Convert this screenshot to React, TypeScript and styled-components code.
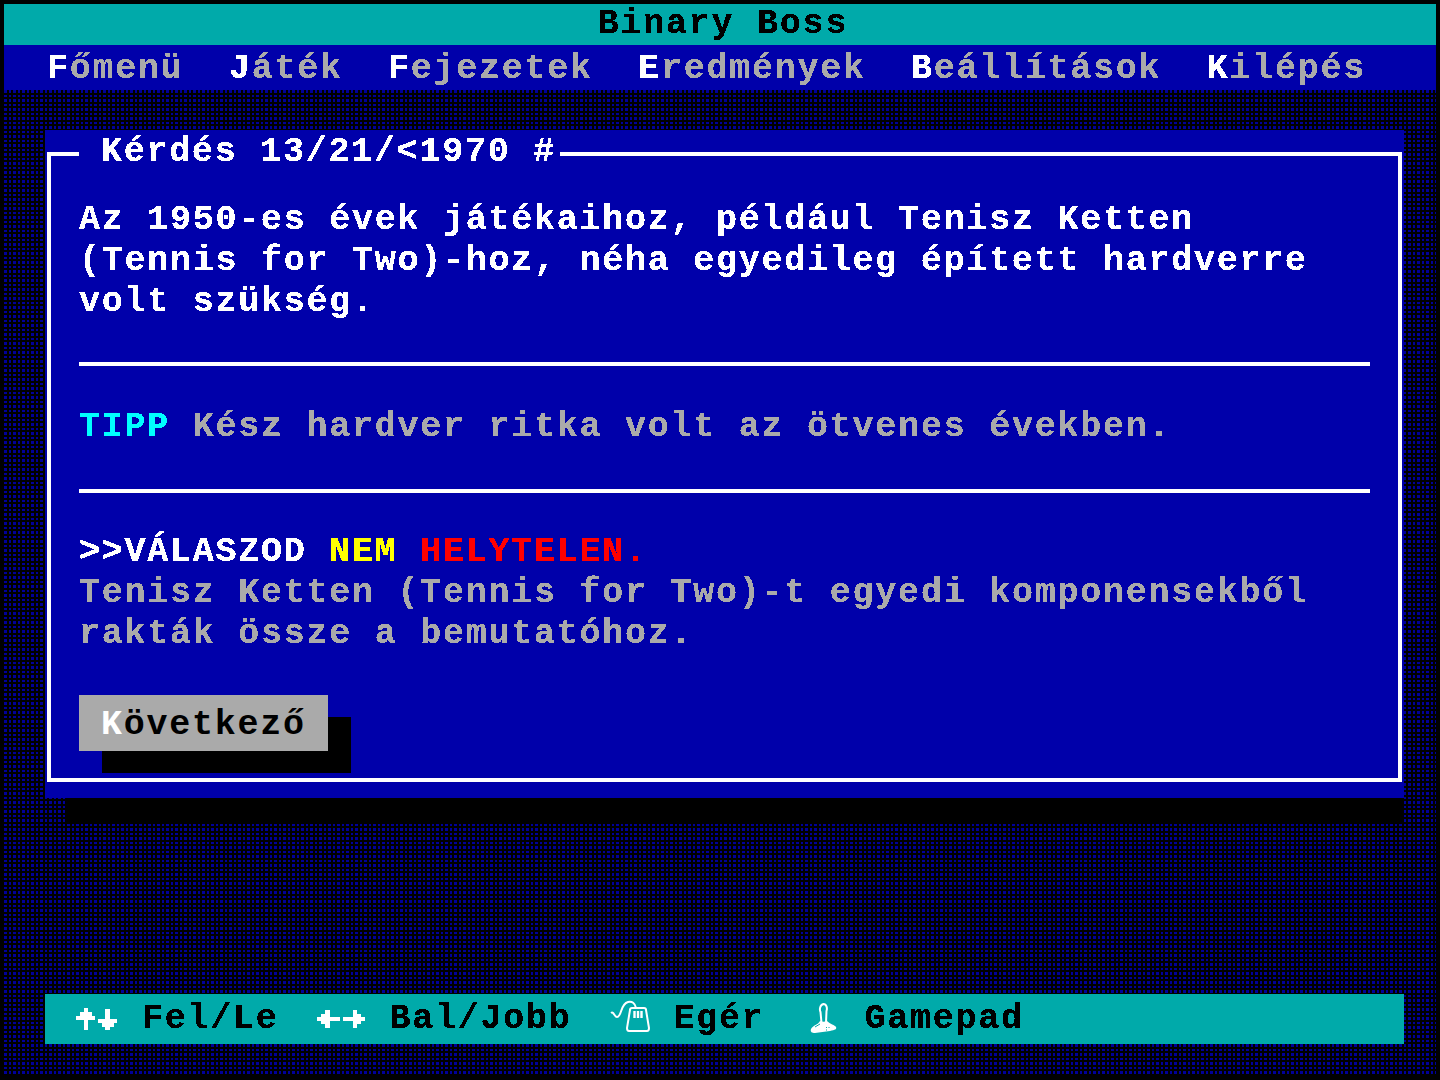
import React from 'react';
import styled, { createGlobalStyle, css } from 'styled-components';

const GlobalStyle = createGlobalStyle`
  html, body {
    margin: 0;
    padding: 0;
    background: #000;
  }
  * {
    box-sizing: border-box;
  }
`;

// every glyph cell of the old text mode is about 22.75px wide
const dosText = css`
  font-family: 'Liberation Mono', 'DejaVu Sans Mono', monospace;
  font-weight: 700;
  font-size: 35px;
  letter-spacing: 1.75px;
  line-height: 41px;
  white-space: pre;
  filter: url(#hard-edge);
`;

const Screen = styled.div`
  width: 1440px;
  height: 1080px;
  padding: 4px;
  background: #000;
  display: flex;
  flex-direction: column;
  overflow: hidden;
`;

const TitleBar = styled.header`
  height: 41px;
  padding-left: 6px;
  background: #00aaaa;
  display: flex;
  justify-content: center;
  align-items: center;
`;

const Title = styled.h1`
  ${dosText};
  margin: 0;
  color: #000;
`;

const MenuBar = styled.nav`
  height: 45px;
  background: #0000aa;
  padding: 4px 0 0 43px;
  display: flex;
  align-items: center;
  gap: 45.33px;
`;

const MenuItem = styled.span`
  ${dosText};
  color: #aaaaaa;
`;

const Hotkey = styled.span<{ $color?: string }>`
  color: ${(p) => p.$color || '#fff'};
`;

// 9px tile holds two dots so they stay crisp at the 4.5px pitch
const Desktop = styled.main`
  flex: 1;
  padding: 40px 32px 32px 41px;
  display: flex;
  flex-direction: column;
  background-color: #000099;
  background-image: linear-gradient(
      to right,
      transparent 3px,
      #000 3px,
      #000 5px,
      transparent 5px,
      transparent 7px,
      #000 7px
    ),
    linear-gradient(
      to bottom,
      transparent 3px,
      #000 3px,
      #000 5px,
      transparent 5px,
      transparent 7px,
      #000 7px
    );
  background-size: 9px 9px;
`;

const Dialog = styled.section`
  height: 668px;
  padding: 6px 2px 16px;
  background: #0000aa;
`;

// the shadow only shows under the dialog, it does not stick out on the right
const DialogShadow = styled.div`
  height: 24px;
  margin-left: 22px;
  background: #000;
`;

const Frame = styled.fieldset`
  height: 100%;
  margin: 0;
  min-width: 0;
  padding: 28px 28px 0;
  border: 4px solid #fff;
`;

const FrameTitle = styled.legend`
  ${dosText};
  line-height: 32px;
  padding: 0 4px 4px 22px;
  color: #fff;
`;

const Paragraph = styled.p<{ $color?: string }>`
  ${dosText};
  margin: 0;
  color: ${(p) => p.$color || '#fff'};
`;

const Rule = styled.hr<{ $above: number; $below: number }>`
  height: 4px;
  width: 1291px;
  margin: ${(p) => p.$above}px 0 ${(p) => p.$below}px;
  border: 0;
  background: #fff;
`;

const NextButton = styled.button`
  ${dosText};
  filter: none;
  display: block;
  width: 249px;
  height: 56px;
  margin-top: 40px;
  padding: 4px 0 0 22px;
  border: 0;
  text-align: left;
  color: #000;
  background: #aaaaaa;
  box-shadow: 23px 22px 0 #000;
`;

const StatusBar = styled.footer`
  height: 50px;
  margin-top: auto;
  padding-left: 31px;
  background: #00aaaa;
  display: flex;
  align-items: center;
  gap: 38px;
`;

const StatusItem = styled.div`
  display: flex;
  align-items: center;
  gap: 24px;
`;

const StatusLabel = styled.span`
  ${dosText};
  color: #000;
`;

const UpDownIcon = () => (
  <svg width="42" height="22" viewBox="0 0 42 22" shapeRendering="crispEdges">
    <path
      fill="#fff"
      d="M7.5 0H12v3.5h3.5v4H19v4h-7V22H7.5V11.500H0v-4h4v-4h3.500zM28.500 1H33.500v10H41v4h-3.500v3.500H34V22h-5v-3.500h-3.500V15H22v-4h6.500z"
    />
  </svg>
);

const LeftRightIcon = () => (
  <svg width="49" height="18" viewBox="0 0 49 18" shapeRendering="crispEdges">
    <path
      fill="#fff"
      d="M8 0h4.500v7h10v4h-10v7H8v-4H4v-3H0V7h4V3.500h4zM36 0h4v3.500h4V7h4v4h-4v3h-4v4h-4v-7H26V7h10z"
    />
  </svg>
);

const MouseIcon = () => (
  <svg width="40" height="45" viewBox="10 0 40 45" fill="none" stroke="#fff" strokeWidth="2">
    <path d="M11 16c3-2 3 4 6 4 5 0 3-13 11-15 4-1 7 1 8 6" />
    <path d="M32 11h12c1 0 2 1 2 2l3 18c0 2-1 3-2 3H29c-1 0-2-1-2-3l3-18c0-1 1-2 2-2z" />
    <path strokeWidth="2.4" d="M34.500 14v7M38 14v7M41.500 14v7" />
  </svg>
);

const JoystickIcon = () => (
  <svg width="38" height="45" viewBox="2 0 38 45">
    <path
      fill="#00aaaa"
      stroke="#fff"
      strokeWidth="2"
      d="M20.500 26l-1-11c-1-2-1-7 3-8 3 0 4 4 3 7l-.5 12z"
    />
    <path fill="#fff" d="M19 24c2 1 5 1 7 0 3 3 8 4 9 6s-1 3-6 4l-15 2c-3 0-5-1-4-4 2-4 7-4 9-8z" />
    <path
      fill="none"
      stroke="#00aaaa"
      strokeWidth="1"
      d="M14 30l5-3M25 30l1 1M28 30l0 1M25 33l1 0"
    />
  </svg>
);

const App = () => {
  const menu = ['Főmenü', 'Játék', 'Fejezetek', 'Eredmények', 'Beállítások', 'Kilépés'];

  return (
    <>
      <GlobalStyle />
      <svg width="0" height="0" style={{ position: 'absolute' }} aria-hidden="true">
        <filter id="hard-edge" colorInterpolationFilters="sRGB">
          <feComponentTransfer>
            <feFuncA type="discrete" tableValues="0 1 1" />
          </feComponentTransfer>
        </filter>
      </svg>
      <Screen>
        <TitleBar>
          <Title>Binary Boss</Title>
        </TitleBar>
        <MenuBar>
          {menu.map((item) => (
            <MenuItem key={item}>
              <Hotkey>{item[0]}</Hotkey>
              {item.slice(1)}
            </MenuItem>
          ))}
        </MenuBar>
        <Desktop>
          <Dialog>
            <Frame>
              <FrameTitle>Kérdés 13/21/&lt;1970 #</FrameTitle>
              <Paragraph>
                Az 1950-es évek játékaihoz, például Tenisz Ketten
                {'\n'}(Tennis for Two)-hoz, néha egyedileg épített hardverre
                {'\n'}volt szükség.
              </Paragraph>
              <Rule $above={39} $below={41} />
              <Paragraph $color="#aaaaaa">
                <Hotkey $color="#00ffff">TIPP</Hotkey> Kész hardver ritka volt az ötvenes években.
              </Paragraph>
              <Rule $above={41} $below={39} />
              <Paragraph $color="#aaaaaa">
                <Hotkey>&gt;&gt;VÁLASZOD</Hotkey> <Hotkey $color="#ffff00">NEM</Hotkey>{' '}
                <Hotkey $color="#ff0000">HELYTELEN.</Hotkey>
                {'\n'}Tenisz Ketten (Tennis for Two)-t egyedi komponensekből
                {'\n'}rakták össze a bemutatóhoz.
              </Paragraph>
              <NextButton>
                <Hotkey>K</Hotkey>övetkező
              </NextButton>
            </Frame>
          </Dialog>
          <DialogShadow />
          <StatusBar>
            <StatusItem>
              <UpDownIcon />
              <StatusLabel>Fel/Le</StatusLabel>
            </StatusItem>
            <StatusItem>
              <LeftRightIcon />
              <StatusLabel>Bal/Jobb</StatusLabel>
            </StatusItem>
            <StatusItem>
              <MouseIcon />
              <StatusLabel>Egér</StatusLabel>
            </StatusItem>
            <StatusItem>
              <JoystickIcon />
              <StatusLabel>Gamepad</StatusLabel>
            </StatusItem>
          </StatusBar>
        </Desktop>
      </Screen>
    </>
  );
};

export default App;
